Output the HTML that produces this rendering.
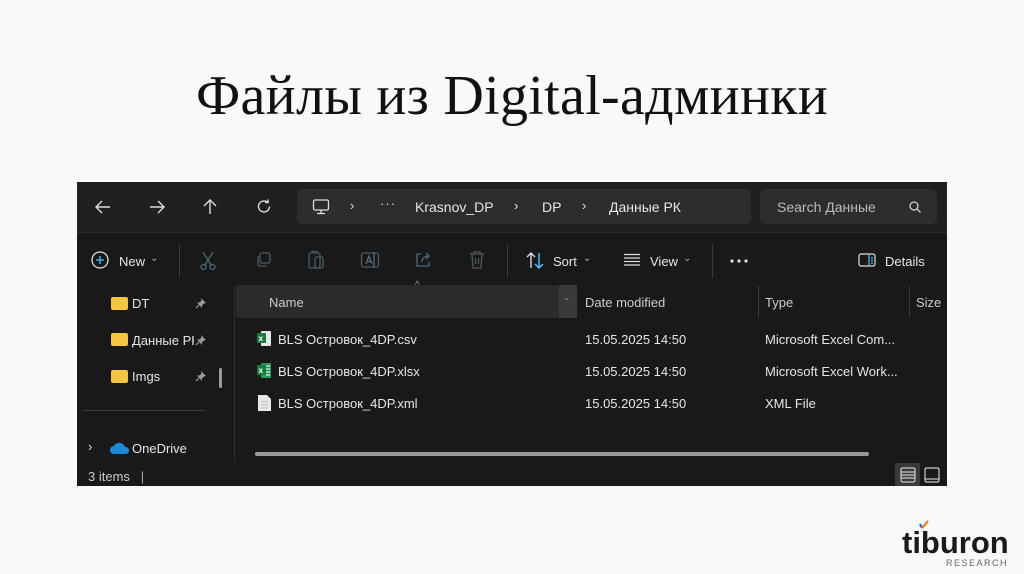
<!DOCTYPE html>
<html><head><meta charset="utf-8">
<style>
*{margin:0;padding:0;box-sizing:border-box}
body{width:1024px;height:574px;background:#f8f9fb;position:relative;overflow:hidden;font-family:"Liberation Sans","DejaVu Sans",sans-serif}
h1{position:absolute;top:64px;left:0;width:1024px;text-align:center;font-family:"Liberation Serif",serif;font-weight:normal;font-size:56px;color:#111;letter-spacing:0.3px}
.win{position:absolute;left:77px;top:182px;width:870px;height:304px;background:#191919;color:#e6e6e6;font-size:13px}
.abs{position:absolute}
.top{left:0;top:0;width:870px;height:50px;background:#202020}
.addr{left:220px;top:7px;width:454px;height:35px;background:#2d2d2d;border-radius:6px}
.search{left:683px;top:7px;width:177px;height:35px;background:#2d2d2d;border-radius:6px}
.t{position:absolute;white-space:nowrap}
.tb{left:0;top:50px;width:870px;height:53px;background:#191919;border-top:1px solid #2b2b2b}
.sep{position:absolute;width:1px;background:#3a3a3a}
.side{left:0;top:103px;width:158px;height:177px;background:#191919;border-right:1px solid #2e2e2e}
.hdr{left:159px;top:103px;width:711px;height:33px;background:#191919}
.status{left:0;top:280px;width:870px;height:24px;background:#191919}
.fold{position:absolute;width:17px;height:13px;background:#f4c542;border-radius:2px}
svg{position:absolute}
</style></head><body>
<h1>Файлы из Digital-админки</h1>
<div class="win">
 <div class="abs top"></div>
 <svg style="left:16px;top:15px" width="20" height="20" viewBox="0 0 20 20" fill="none" stroke="#ddd" stroke-width="1.4"><path d="M17 10H3M9 4L3 10l6 6"/></svg>
 <svg style="left:70px;top:15px" width="20" height="20" viewBox="0 0 20 20" fill="none" stroke="#ddd" stroke-width="1.4"><path d="M3 10h14M11 4l6 6-6 6"/></svg>
 <svg style="left:123px;top:15px" width="20" height="20" viewBox="0 0 20 20" fill="none" stroke="#ddd" stroke-width="1.4"><path d="M10 17V3M4 9l6-6 6 6"/></svg>
 <svg style="left:177px;top:15px" width="20" height="20" viewBox="0 0 20 20" fill="none" stroke="#ddd" stroke-width="1.4"><path d="M15.5 9.5a5.5 5.5 0 1 1-2-4.3M14 2.5v3h-3"/></svg>
 <div class="abs addr"></div>
 <svg style="left:234px;top:15px" width="20" height="20" viewBox="0 0 20 20" fill="none" stroke="#ddd" stroke-width="1.3"><rect x="2.5" y="3" width="15" height="10" rx="1.5"/><path d="M10 13v3M6 16.5h8"/></svg>
 <div class="t" style="left:273px;top:16px;color:#ddd">›</div>
 <div class="t" style="left:303px;top:14px;color:#ddd;letter-spacing:1px">···</div>
 <div class="t" style="left:338px;top:17px;font-size:14px">Krasnov_DP</div>
 <div class="t" style="left:437px;top:16px">›</div>
 <div class="t" style="left:465px;top:17px;font-size:14px">DP</div>
 <div class="t" style="left:505px;top:16px">›</div>
 <div class="t" style="left:532px;top:17px;font-size:14px">Данные РК</div>
 <div class="abs search"></div>
 <div class="t" style="left:700px;top:17px;color:#bbb;font-size:14px">Search Данные</div>
 <svg style="left:831px;top:18px" width="14" height="14" viewBox="0 0 14 14" fill="none" stroke="#ccc" stroke-width="1.3"><circle cx="6" cy="6" r="4"/><path d="M9 9l3.5 3.5"/></svg>

 <div class="abs tb"></div>
 <svg style="left:14px;top:69px" width="18" height="18" viewBox="0 0 18 18" fill="none" stroke-width="1.3"><circle cx="9" cy="9" r="8" stroke="#ddd"/><path d="M9 5v8M5 9h8" stroke="#4cc2ff"/></svg>
 <div class="t" style="left:42px;top:72px">New</div><div class="t" style="left:73px;top:71px;font-size:10px;color:#aaa">⌄</div>
 <div class="sep" style="left:102px;top:62px;height:34px"></div>
 <svg style="left:122px;top:69px" width="18" height="20" viewBox="0 0 18 20" fill="none" stroke="#4d6a7a" stroke-width="1.3"><path d="M4 1l8 13M14 1L6 14"/><circle cx="4.5" cy="16" r="2.5"/><circle cx="13.5" cy="16" r="2.5"/></svg>
 <svg style="left:177px;top:69px" width="18" height="18" viewBox="0 0 18 18" fill="none" stroke="#4d5a62" stroke-width="1.3"><rect x="6" y="2" width="10" height="10" rx="2"/><path d="M4 5v8a2 2 0 0 0 2 2h7"/></svg>
 <svg style="left:230px;top:68px" width="18" height="20" viewBox="0 0 18 20" fill="none" stroke="#4d5a62" stroke-width="1.3"><rect x="2" y="3" width="11" height="15" rx="2"/><rect x="8" y="7" width="8" height="11" rx="1.5"/><path d="M5 3V1.5h5V3"/></svg>
 <svg style="left:283px;top:69px" width="20" height="18" viewBox="0 0 20 18" fill="none" stroke="#4d5a62" stroke-width="1.3"><rect x="1.5" y="2" width="17" height="14" rx="2"/><path d="M6 13l3-8 3 8M7 10.5h4M14 1v16" stroke="#5a6c78"/></svg>
 <svg style="left:337px;top:69px" width="18" height="18" viewBox="0 0 18 18" fill="none" stroke="#4d6a7a" stroke-width="1.3"><path d="M7 3H3v12h12v-4"/><path d="M8 11c0-4 3-6 7-6M12 2l3 3-3 3"/></svg>
 <svg style="left:392px;top:68px" width="16" height="20" viewBox="0 0 16 20" fill="none" stroke="#4d5a62" stroke-width="1.3"><path d="M1 4h14M5 4V2h6v2M3 4l1 14h8l1-14M6.5 8v6M9.5 8v6"/></svg>
 <div class="sep" style="left:430px;top:62px;height:34px"></div>
 <svg style="left:449px;top:70px" width="18" height="17" viewBox="0 0 18 17" fill="none" stroke-width="1.4"><path d="M5 16V1M1 5l4-4 4 4" stroke="#ddd"/><path d="M13 1v15M9 12l4 4 4-4" stroke="#4cc2ff"/></svg>
 <div class="t" style="left:476px;top:72px">Sort</div><div class="t" style="left:506px;top:71px;font-size:10px;color:#aaa">⌄</div>
 <svg style="left:546px;top:71px" width="18" height="14" viewBox="0 0 18 14" fill="none" stroke="#ddd" stroke-width="1.2"><path d="M1 1.5h16M1 5h16M1 8.5h16M1 12h16"/></svg>
 <div class="t" style="left:573px;top:72px">View</div><div class="t" style="left:606px;top:71px;font-size:10px;color:#aaa">⌄</div>
 <div class="sep" style="left:635px;top:62px;height:34px"></div>
 <svg style="left:653px;top:77px" width="18" height="4" viewBox="0 0 18 4" fill="#ddd"><circle cx="2" cy="2" r="1.6"/><circle cx="9" cy="2" r="1.6"/><circle cx="16" cy="2" r="1.6"/></svg>
 <svg style="left:781px;top:71px" width="18" height="14" viewBox="0 0 18 14" fill="none" stroke="#ddd" stroke-width="1.2"><rect x="1" y="1" width="16" height="12" rx="2"/><path d="M11 1v12M13 5h2M13 7.5h2M13 10h2" stroke="#4cc2ff"/></svg>
 <div class="t" style="left:808px;top:72px">Details</div>

 <div class="abs side"></div>
 <div class="fold" style="left:34px;top:115px"></div><div class="t" style="left:55px;top:114px">DT</div>
 <div class="fold" style="left:34px;top:151px"></div><div class="t" style="left:55px;top:151px;width:62px;overflow:hidden">Данные РК</div>
 <div class="fold" style="left:34px;top:188px"></div><div class="t" style="left:55px;top:187px">Imgs</div>
 <svg style="left:118px;top:115px" width="12" height="12" viewBox="0 0 12 12" fill="#9a9a9a"><path d="M6 1l5 5-2 0.5-2 2 0 2.5L2 5.5 4.5 5.5l2-2z"/><path d="M4 8L1 11" stroke="#9a9a9a" stroke-width="1.2"/></svg>
 <svg style="left:118px;top:152px" width="12" height="12" viewBox="0 0 12 12" fill="#9a9a9a"><path d="M6 1l5 5-2 0.5-2 2 0 2.5L2 5.5 4.5 5.5l2-2z"/><path d="M4 8L1 11" stroke="#9a9a9a" stroke-width="1.2"/></svg>
 <svg style="left:118px;top:188px" width="12" height="12" viewBox="0 0 12 12" fill="#9a9a9a"><path d="M6 1l5 5-2 0.5-2 2 0 2.5L2 5.5 4.5 5.5l2-2z"/><path d="M4 8L1 11" stroke="#9a9a9a" stroke-width="1.2"/></svg>
 <div class="abs" style="left:142px;top:186px;width:3px;height:20px;background:#9a9a9a;border-radius:2px"></div>
 <div class="abs" style="left:6px;top:228px;width:122px;height:1px;background:#3a3a3a"></div>
 <div class="t" style="left:11px;top:257px;color:#ddd">›</div>
 <svg style="left:33px;top:260px" width="20" height="12" viewBox="0 0 20 12"><path d="M4 12a4 4 0 0 1 0-8 6 6 0 0 1 11 1 3.5 3.5 0 0 1 1 7z" fill="#1e88d8"/></svg>
 <div class="t" style="left:55px;top:259px">OneDrive</div>

 <div class="abs hdr"></div>
 <div class="abs" style="left:159px;top:103px;width:340px;height:33px;background:#2b2b2b"></div>
 <div class="abs" style="left:482px;top:103px;width:18px;height:33px;background:#3a3a3a"></div>
 <div class="t" style="left:486px;top:110px;color:#999;font-size:9px">⌄</div>
 <div class="t" style="left:338px;top:98px;color:#999;font-size:10px">^</div>
 <div class="t" style="left:192px;top:113px;color:#ccc">Name</div>
 <div class="t" style="left:508px;top:113px;color:#ccc">Date modified</div>
 <div class="sep" style="left:681px;top:104px;height:31px"></div>
 <div class="t" style="left:688px;top:113px;color:#ccc">Type</div>
 <div class="sep" style="left:832px;top:104px;height:31px"></div>
 <div class="t" style="left:839px;top:113px;color:#ccc">Size</div>

 <svg style="left:180px;top:148px" width="15" height="17" viewBox="0 0 15 17"><rect x="4" y="1" width="10" height="15" rx="1" fill="#e8e8e8"/><rect x="0" y="3" width="9" height="10" rx="1" fill="#1d7a45"/><text x="1.5" y="11" font-size="8" fill="#fff" font-family="Liberation Sans" font-weight="bold">x</text></svg>
 <div class="t" style="left:201px;top:150px">BLS Островок_4DP.csv</div>
 <div class="t" style="left:508px;top:150px">15.05.2025 14:50</div>
 <div class="t" style="left:688px;top:150px">Microsoft Excel Com...</div>
 <svg style="left:180px;top:180px" width="15" height="17" viewBox="0 0 15 17"><rect x="4" y="1" width="10" height="15" rx="1" fill="#2a9a5a"/><path d="M9 4h4M9 7h4M9 10h4M9 13h4" stroke="#fff" stroke-width="1"/><rect x="0" y="3" width="9" height="10" rx="1" fill="#1d7a45"/><text x="1.5" y="11" font-size="8" fill="#fff" font-family="Liberation Sans" font-weight="bold">x</text></svg>
 <div class="t" style="left:201px;top:182px">BLS Островок_4DP.xlsx</div>
 <div class="t" style="left:508px;top:182px">15.05.2025 14:50</div>
 <div class="t" style="left:688px;top:182px">Microsoft Excel Work...</div>
 <svg style="left:181px;top:212px" width="13" height="17" viewBox="0 0 13 17"><path d="M0 1h9l4 4v12H0z" fill="#e8e8e8"/><path d="M3 8h7M3 11h7M3 14h7" stroke="#bbb" stroke-width="1"/></svg>
 <div class="t" style="left:201px;top:214px">BLS Островок_4DP.xml</div>
 <div class="t" style="left:508px;top:214px">15.05.2025 14:50</div>
 <div class="t" style="left:688px;top:214px">XML File</div>

 <div class="abs" style="left:178px;top:270px;width:614px;height:4px;background:#9a9a9a;border-radius:2px"></div>

 <div class="abs status"></div>
 <div class="t" style="left:11px;top:287px;font-size:13px;color:#ccc">3 items &nbsp;&nbsp;<span style="color:#aaa">|</span></div>
 <div class="abs" style="left:818px;top:281px;width:25px;height:23px;background:#3a3a3a"></div>
 <svg style="left:823px;top:285px" width="16" height="16" viewBox="0 0 16 16" fill="none" stroke="#ccc" stroke-width="1.2"><rect x="1" y="1" width="14" height="14" rx="1.5"/><path d="M1 5h14M1 8h14M1 11h14"/></svg>
 <svg style="left:847px;top:285px" width="16" height="16" viewBox="0 0 16 16" fill="none" stroke="#ccc" stroke-width="1.2"><rect x="1" y="1" width="14" height="14" rx="1.5"/><path d="M1 12h14"/></svg>
</div>

<div class="t" style="left:902px;top:525px;font-size:31px;font-weight:bold;color:#1a1a1a;letter-spacing:0px;font-family:'Liberation Sans',sans-serif">tiburon</div>
<svg style="left:918px;top:520px" width="12" height="10" viewBox="0 0 12 10"><path d="M2 4l2 4" stroke="#2266dd" stroke-width="2.2"/><path d="M4 8l6-7" stroke="#f07a1e" stroke-width="2.2"/></svg>
<div class="t" style="left:946px;top:558px;font-size:9px;color:#666;letter-spacing:1.5px">RESEARCH</div>
</body></html>
